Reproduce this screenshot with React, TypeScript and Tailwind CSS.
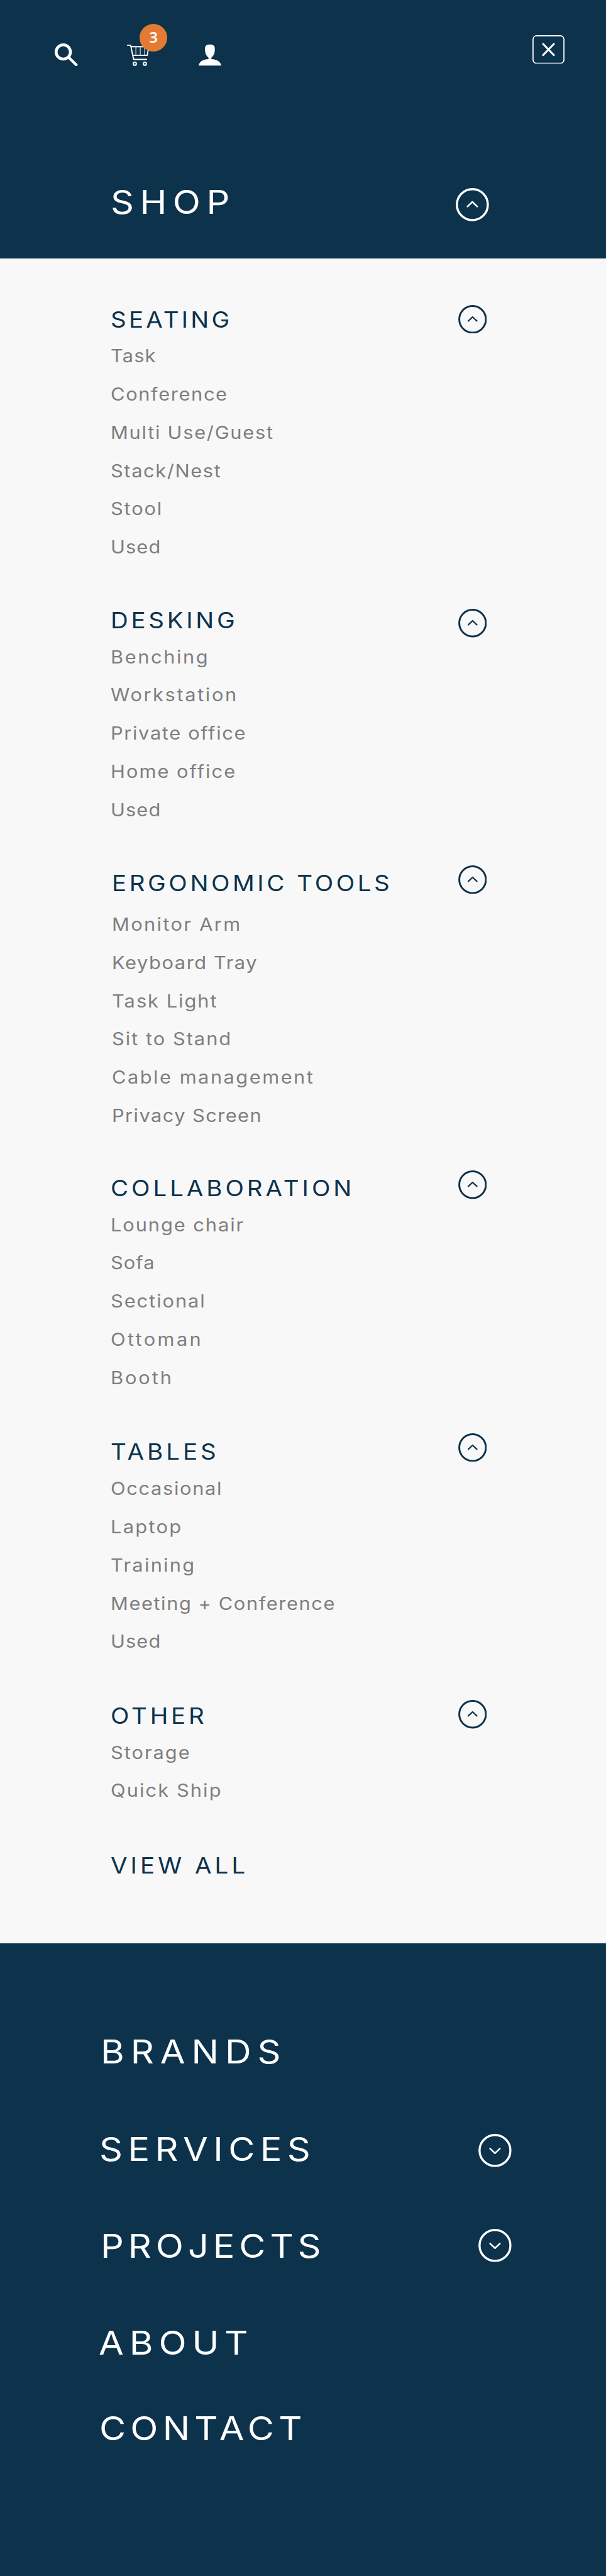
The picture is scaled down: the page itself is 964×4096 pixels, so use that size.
import React from 'react';

type Label = { text: string; tracking: string };

type Section = {
  title: Label;
  spacing: string;
  indent: string;
  toggleOffset: string;
  listOffset: string;
  items: Label[];
};

const sections: Section[] = [
  {
    title: { text: 'SEATING', tracking: 'tracking-[3.81px]' },
    spacing: 'mt-[68.5px]',
    indent: 'pl-[176.1px]',
    toggleOffset: 'mt-[5.2px]',
    listOffset: 'mt-[0.8px]',
    items: [
      { text: 'Task', tracking: 'tracking-[1.04px]' },
      { text: 'Conference', tracking: 'tracking-[1.48px]' },
      { text: 'Multi Use/Guest', tracking: 'tracking-[1.57px]' },
      { text: 'Stack/Nest', tracking: 'tracking-[1.45px]' },
      { text: 'Stool', tracking: 'tracking-[1.65px]' },
      { text: 'Used', tracking: 'tracking-[0.99px]' },
    ],
  },
  {
    title: { text: 'DESKING', tracking: 'tracking-[4.28px]' },
    spacing: 'mt-[57px]',
    indent: 'pl-[176.4px]',
    toggleOffset: 'mt-[10.5px]',
    listOffset: 'mt-[0.8px]',
    items: [
      { text: 'Benching', tracking: 'tracking-[2.35px]' },
      { text: 'Workstation', tracking: 'tracking-[2.36px]' },
      { text: 'Private office', tracking: 'tracking-[1.49px]' },
      { text: 'Home office', tracking: 'tracking-[1.83px]' },
      { text: 'Used', tracking: 'tracking-[0.99px]' },
    ],
  },
  {
    title: { text: 'ERGONOMIC TOOLS', tracking: 'tracking-[4.16px]' },
    spacing: 'mt-[57.7px]',
    indent: 'pl-[177.9px]',
    toggleOffset: 'mt-[-0.5px]',
    listOffset: 'mt-[8px]',
    items: [
      { text: 'Monitor Arm', tracking: 'tracking-[2.13px]' },
      { text: 'Keyboard Tray', tracking: 'tracking-[1.43px]' },
      { text: 'Task Light', tracking: 'tracking-[1.8px]' },
      { text: 'Sit to Stand', tracking: 'tracking-[1.82px]' },
      { text: 'Cable management', tracking: 'tracking-[2.26px]' },
      { text: 'Privacy Screen', tracking: 'tracking-[1.29px]' },
    ],
  },
  {
    title: { text: 'COLLABORATION', tracking: 'tracking-[4.49px]' },
    spacing: 'mt-[56.2px]',
    indent: 'pl-[176.3px]',
    toggleOffset: 'mt-[0.5px]',
    listOffset: 'mt-[0.8px]',
    items: [
      { text: 'Lounge chair', tracking: 'tracking-[1.75px]' },
      { text: 'Sofa', tracking: 'tracking-[0.95px]' },
      { text: 'Sectional', tracking: 'tracking-[1.76px]' },
      { text: 'Ottoman', tracking: 'tracking-[3.06px]' },
      { text: 'Booth', tracking: 'tracking-[2.61px]' },
    ],
  },
  {
    title: { text: 'TABLES', tracking: 'tracking-[4.5px]' },
    spacing: 'mt-[59.2px]',
    indent: 'pl-[176px]',
    toggleOffset: 'mt-[-1.5px]',
    listOffset: 'mt-[1px]',
    items: [
      { text: 'Occasional', tracking: 'tracking-[1.51px]' },
      { text: 'Laptop', tracking: 'tracking-[2.09px]' },
      { text: 'Training', tracking: 'tracking-[2.08px]' },
      { text: 'Meeting + Conference', tracking: 'tracking-[1.43px]' },
      { text: 'Used', tracking: 'tracking-[0.99px]' },
    ],
  },
  {
    title: { text: 'OTHER', tracking: 'tracking-[4.32px]' },
    spacing: 'mt-[58.3px]',
    indent: 'pl-[176.1px]',
    toggleOffset: 'mt-[3.8px]',
    listOffset: 'mt-[1px]',
    items: [
      { text: 'Storage', tracking: 'tracking-[1.8px]' },
      { text: 'Quick Ship', tracking: 'tracking-[1.9px]' },
    ],
  },
];

const links = [
  { text: 'BRANDS', tracking: 'tracking-[9.02px]', spacing: 'mt-[141.8px]', indent: 'pl-[159.7px]', toggle: '' },
  { text: 'SERVICES', tracking: 'tracking-[7.61px]', spacing: 'mt-[94.6px]', indent: 'pl-[157.8px]', toggle: 'mt-[6.4px]' },
  { text: 'PROJECTS', tracking: 'tracking-[6.27px]', spacing: 'mt-[94.6px]', indent: 'pl-[159.7px]', toggle: 'mt-[2.7px]' },
  { text: 'ABOUT', tracking: 'tracking-[8.09px]', spacing: 'mt-[93.7px]', indent: 'pl-[157.3px]', toggle: '' },
  { text: 'CONTACT', tracking: 'tracking-[6.5px]', spacing: 'mt-[76.4px]', indent: 'pl-[158px]', toggle: '' },
];

function Chevron({ className }: { className: string }) {
  return (
    <svg viewBox="0 0 58 58" fill="none" stroke="currentColor" className={`shrink-0 ${className}`}>
      <circle cx="29" cy="29" r="27" strokeWidth="3.8" />
      <path d="M20.4 32.4L29 24.2L37.6 32.4" strokeWidth="2.8" strokeLinecap="round" strokeLinejoin="round" />
    </svg>
  );
}

function SearchIcon() {
  return (
    <svg viewBox="0 0 40 40" fill="none" stroke="currentColor" className="size-[36.4px]">
      <circle cx="15" cy="15" r="12.5" strokeWidth="5" />
      <path d="M25 25L37.6 37.4" strokeWidth="4.8" strokeLinecap="round" />
    </svg>
  );
}

function CartIcon() {
  return (
    <svg viewBox="0 0 40 40" fill="none" stroke="currentColor" className="size-[36.4px]">
      <path
        d="M1 3.3H6.4L11.6 28H34.2M7.6 5.8H38L35.4 20.8H10.4"
        strokeWidth="2.1"
        strokeLinecap="round"
        strokeLinejoin="round"
      />
      <path d="M15.5 6V20.5M23.2 6V20.5M30.8 6V20.5" strokeWidth="1.1" />
      <circle cx="13.7" cy="35.6" r="2.6" strokeWidth="2.3" />
      <circle cx="31.3" cy="35.6" r="2.6" strokeWidth="2.3" />
    </svg>
  );
}

function UserIcon() {
  return (
    <svg viewBox="0 0 40 40" fill="currentColor" className="size-[36.4px]">
      <path d="M19.7 2C25 2 27.8 3.5 28.2 8C28.5 12 28.3 16 26.8 19C25.5 21.8 23.8 23.8 22.3 25V27.5C31 28 38 31 39.7 38.8H0C1.5 31 8.5 28 17.2 27.5V25C15.6 23.8 13.9 21.8 12.6 19C11.2 16 11 12 11.2 8C11.6 3.5 14.4 2 19.7 2Z" />
    </svg>
  );
}

export default function App() {
  return (
    <div className="flex h-[4096px] w-[964px] flex-col overflow-hidden bg-[#f8f8f8] font-['Inter',sans-serif] font-normal text-[#0c324c]">
      <header className="flex h-[411px] shrink-0 flex-col bg-[#0c324c] text-white">
        <div className="flex h-[291px] items-start justify-between pr-[66.4px] pl-[87.3px]">
          <div className="flex gap-[78.2px] pt-[69.1px]">
            <button aria-label="Search">
              <SearchIcon />
            </button>
            <button aria-label="Cart" className="relative">
              <CartIcon />
              <span className="absolute top-[-31px] left-[20px] flex size-[43.7px] items-center justify-center rounded-full bg-[#e37b34] pb-[1px] pl-[1px] font-['Noto_Sans',sans-serif] text-[24px] leading-none font-semibold">
                3
              </span>
            </button>
            <button aria-label="Account">
              <UserIcon />
            </button>
          </div>
          <button aria-label="Close" className="mt-[55.5px]">
            <svg viewBox="0 0 56 50" fill="none" stroke="currentColor" className="h-[45.5px] w-[51px]">
              <rect x="1" y="1" width="54" height="48" rx="6" strokeWidth="1.9" />
              <path d="M18.7 15.4L37.3 34.6M37.3 15.4L18.7 34.6" strokeWidth="3.5" strokeLinecap="round" />
            </svg>
          </button>
        </div>
        <div className="flex h-[60px] items-start justify-between pr-[186.4px] pl-[176.2px]">
          <h1 className="origin-left scale-x-110 text-[52.5px] leading-[60px] tracking-[8.57px]">SHOP</h1>
          <Chevron className="mt-[8.2px] size-[52.8px]" />
        </div>
      </header>

      <main className="flex h-[2679.25px] shrink-0 flex-col">
        {sections.map((section) => (
          <section key={section.title.text} className={`${section.spacing} ${section.indent}`}>
            <div className="flex h-[56px] items-start justify-between pr-[190px]">
              <h2
                className={`origin-left scale-x-110 text-[35px] leading-[56px] whitespace-nowrap ${section.title.tracking}`}
              >
                {section.title.text}
              </h2>
              <Chevron className={`size-[45.5px] ${section.toggleOffset}`} />
            </div>
            <ul
              className={`w-fit origin-left scale-x-110 text-[28px] leading-[60.75px] text-[#7e7e7e] ${section.listOffset}`}
            >
              {section.items.map((item) => (
                <li key={item.text} className={item.tracking}>
                  {item.text}
                </li>
              ))}
            </ul>
          </section>
        ))}
        <div className="mt-[59.5px] flex pl-[176.1px]">
          <h2 className="origin-left scale-x-110 text-[35px] leading-[56px] tracking-[4.58px]">VIEW ALL</h2>
        </div>
      </main>

      <nav className="flex grow flex-col bg-[#0c324c] text-white">
        {links.map((link) => (
          <div
            key={link.text}
            className={`flex h-[60px] items-start justify-between pr-[150px] ${link.indent} ${link.spacing}`}
          >
            <span className={`origin-left scale-x-110 text-[52.5px] leading-[60px] ${link.tracking}`}>{link.text}</span>
            {link.toggle && <Chevron className={`size-[52.8px] rotate-180 ${link.toggle}`} />}
          </div>
        ))}
      </nav>
    </div>
  );
}
